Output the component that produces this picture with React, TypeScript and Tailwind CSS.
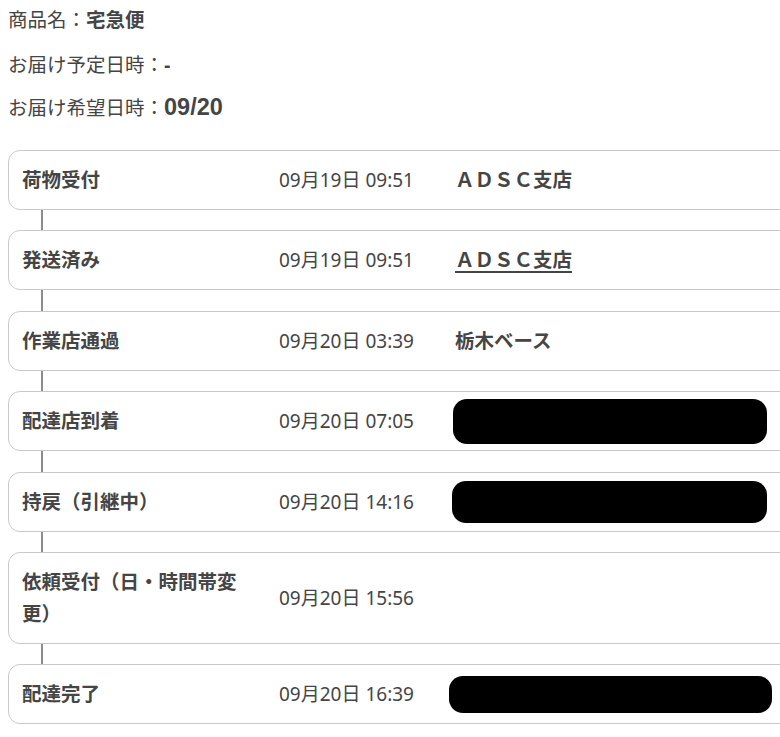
import { FC } from "react"

type Row = {
    label: string
    date: string
    place?: string
    link?: boolean
    redact?: string
}

const rows: Row[] = [
    { label: "荷物受付", date: "09月19日 09:51", place: "ＡＤＳＣ支店" },
    { label: "発送済み", date: "09月19日 09:51", place: "ＡＤＳＣ支店", link: true },
    { label: "作業店通過", date: "09月20日 03:39", place: "栃木ベース" },
    { label: "配達店到着", date: "09月20日 07:05", redact: "ml-[-2px] my-[-6.5px] w-[314px] h-[45px]" },
    { label: "持戻（引継中）", date: "09月20日 14:16", redact: "ml-[-3px] my-[-5px] w-[315px] h-[42px]" },
    { label: "依頼受付（日・時間帯変更）", date: "09月20日 15:56" },
    { label: "配達完了", date: "09月20日 16:39", redact: "ml-[-6px] my-[-2.5px] w-[323px] h-[37px]" },
]

const App: FC = () => {
    return (
        <div
            className="w-[780px] min-h-[737px] overflow-hidden bg-white text-[#454545]"
            style={{ fontFamily: '"Liberation Sans", "Noto Sans CJK JP", sans-serif' }}
        >
            <div className="pl-[8px] pt-[4px]">
                {/* header info */}
                <p className="text-[19.5px] leading-[32px]">
                    商品名：<span className="font-bold">宅急便</span>
                </p>
                <p className="mt-[13px] text-[19.5px] leading-[32px]">
                    お届け予定日時：<span className="font-bold">-</span>
                </p>
                <p className="mt-[10px] text-[19.5px] leading-[32px]">
                    お届け希望日時：<span className="text-[23.5px] font-bold">09/20</span>
                </p>

                {/* tracking list */}
                <div className="mt-[26px] flex flex-col">
                    {rows.map((row, i) => (
                        <div key={i}>
                            {i > 0 && (
                                <div className="h-[20.4px] pl-[33px]">
                                    <div className="h-full w-[2px] bg-[#8c8c8c]"></div>
                                </div>
                            )}
                            <div className="flex w-[calc(100%+40px)] items-center rounded-[12px] border border-[#c9c9c9] py-[13px] pl-[13px]">
                                <div className="w-[257px] shrink-0 pr-[28px] text-[19.5px] font-bold leading-[32px]">
                                    {row.label}
                                </div>
                                <div
                                    className="w-[176px] shrink-0 text-[19px] font-normal leading-[32px]"
                                    style={{ fontFamily: '"Noto Sans", "Noto Sans CJK JP", sans-serif' }}
                                >
                                    {row.date}
                                </div>
                                <div className="text-[19.5px] font-bold leading-[32px]">
                                    {row.redact ? (
                                        <div className={`${row.redact} rounded-[14px] bg-black`}></div>
                                    ) : row.place ? (
                                        <span className={row.link ? "underline decoration-[1.5px] underline-offset-[4px]" : ""}>
                                            {row.place}
                                        </span>
                                    ) : null}
                                </div>
                            </div>
                        </div>
                    ))}
                </div>
            </div>
        </div>
    )
}

export default App
